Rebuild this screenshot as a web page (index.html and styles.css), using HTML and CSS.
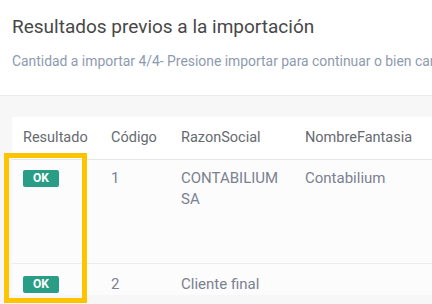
FILE: index.html
```html
<!DOCTYPE html>
<html>
<head>
<meta charset="utf-8">
<link rel="stylesheet" href="styles.css">
</head>
<body>
<div class="page">
  <header class="head">
    <h1 class="title">Resultados previos a la importación</h1>
    <p class="sub">Cantidad a importar 4/4- Presione importar para continuar o bien cancelar</p>
  </header>
  <section class="band">
    <table class="tbl">
      <colgroup>
        <col class="c1"><col class="c2"><col class="c3"><col class="c4">
      </colgroup>
      <thead>
        <tr><th>Resultado</th><th>Código</th><th>RazonSocial</th><th>NombreFantasia</th></tr>
      </thead>
      <tbody>
        <tr class="r1"><td><span class="ok">OK</span></td><td>1</td><td>CONTABILIUM<br>SA</td><td>Contabilium</td></tr>
        <tr class="r2"><td><span class="ok">OK</span></td><td>2</td><td>Cliente final</td><td></td></tr>
      </tbody>
    </table>
  </section>
  <div class="highlight"></div>
</div>
</body>
</html>
```
FILE: styles.css
```css
* { box-sizing: border-box; }
html, body { margin: 0; padding: 0; }
body {
  width: 432px;
  height: 304px;
  overflow: hidden;
  background: #ffffff;
  font-family: Roboto, "Liberation Sans", Arial, sans-serif;
}
.page { position: relative; height: 304px; overflow: hidden; }
.head {
  height: 96px;
  padding: 15px 0 0 12px;
  border-bottom: 1px solid #ebebeb;
  white-space: nowrap;
}
.title {
  margin: 0;
  font-size: 19px;
  font-weight: 400;
  line-height: 24px;
  color: #474747;
}
.sub {
  margin: 13px 0 0 0;
  font-size: 13.9px;
  line-height: 18px;
  color: #8d9bb0;
}
.band {
  background: #f7f7f7;
  padding: 21px 0 0 12px;
  height: 208px;
}
.tbl {
  border-collapse: collapse;
  table-layout: fixed;
  width: 440px;
  background: #ffffff;
}
.c1 { width: 88px; }
.c2 { width: 70px; }
.c3 { width: 124px; }
.c4 { width: 158px; }
.tbl th {
  height: 42px;
  padding: 0 0 0 11px;
  text-align: left;
  font-weight: 400;
  font-size: 14.5px;
  color: #666a70;
  border-bottom: 1px solid #e6e6e6;
  white-space: nowrap;
}
.tbl td {
  vertical-align: top;
  padding: 8px 0 0 11px;
  font-size: 15px;
  line-height: 21px;
  color: #7b8190;
  white-space: nowrap;
  background: #fcfcfc;
}
.r1 td { height: 104px; border-bottom: 1px solid #ececec; }
.r2 td { padding-top: 10px; }
.ok {
  display: inline-block;
  width: 36px;
  height: 17px;
  margin-top: 2px;
  border-radius: 2px;
  background: #2a9d87;
  color: #ffffff;
  font-size: 12px;
  font-weight: 700;
  line-height: 17px;
  text-align: center;
  vertical-align: top;
}
.highlight {
  position: absolute;
  left: 4px;
  top: 153px;
  width: 83px;
  height: 150px;
  border: 5px solid #ffc400;
}
```
